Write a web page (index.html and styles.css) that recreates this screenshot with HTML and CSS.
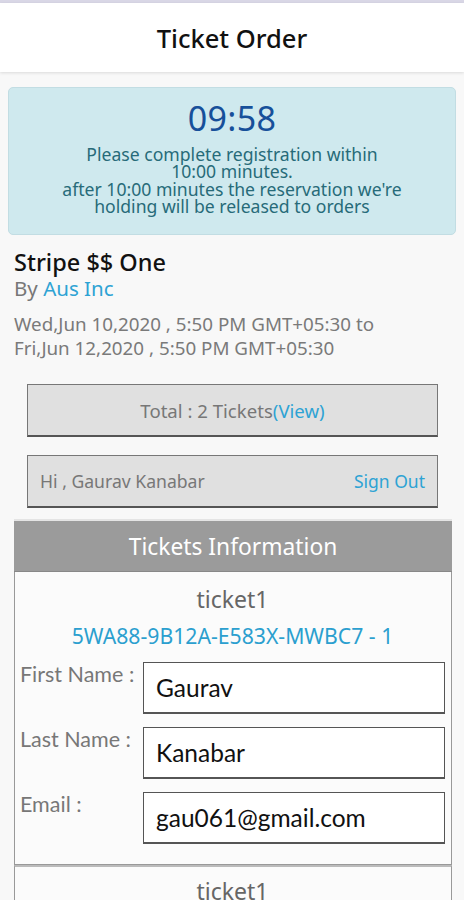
FILE: index.html
```html
<!DOCTYPE html>
<html>
<head>
<meta charset="utf-8">
<link rel="stylesheet" href="styles.css">
</head>
<body>
<div class="topline"></div>
<header class="header">Ticket Order</header>
<main class="content">
  <section class="timer">
    <div class="timer-count">09:58</div>
    <div class="timer-text">Please complete registration within<br>10:00 minutes.<br>after 10:00 minutes the reservation we're<br>holding will be released to orders</div>
  </section>
  <section class="event">
    <h1 class="event-title">Stripe $$ One</h1>
    <div class="event-by">By <a class="link">Aus Inc</a></div>
    <div class="event-date">Wed,Jun 10,2020 , 5:50 PM GMT+05:30 to<br>Fri,Jun 12,2020 , 5:50 PM GMT+05:30</div>
  </section>
  <div class="box box-total">Total : 2 Tickets<a class="link">(View)</a></div>
  <div class="box box-user"><span>Hi , Gaurav Kanabar</span><a class="link">Sign Out</a></div>
  <section class="tickets">
    <div class="tickets-head">Tickets Information</div>
    <div class="ticket">
      <div class="ticket-name">ticket1</div>
      <div class="ticket-code">5WA88-9B12A-E583X-MWBC7 - 1</div>
      <div class="field"><label>First Name :</label><div class="input">Gaurav</div></div>
      <div class="field"><label>Last Name :</label><div class="input">Kanabar</div></div>
      <div class="field"><label>Email :</label><div class="input">gau061@gmail.com</div></div>
    </div>
    <div class="ticket">
      <div class="ticket-name">ticket1</div>
    </div>
  </section>
</main>
</body>
</html>
```
FILE: styles.css
```css
* { box-sizing: border-box; }
html, body { margin: 0; padding: 0; }
body {
  background: #f8f8f8;
  font-family: "Noto Sans", Roboto, sans-serif;
  color: #333;
  width: 464px;
  height: 900px;
  overflow: hidden;
}
.topline { height: 3px; background: #d9d7e6; }
.header {
  background: #fff;
  height: 69px;
  display: flex;
  align-items: center;
  justify-content: center;
  font-size: 25.5px;
  font-weight: 500;
  color: #111;
  box-shadow: 0 1px 3px rgba(0,0,0,0.12);
  position: relative;
}
.content { padding: 15px 8px 0 8px; }
.timer {
  background: #cfe9ee;
  border: 1px solid #c2dde3;
  border-radius: 5px;
  height: 148px;
  text-align: center;
  padding-top: 12px;
}
.timer-count {
  font-size: 34px;
  color: #17509a;
  line-height: 36px;
  letter-spacing: 0.3px;
}
.timer-text {
  margin-top: 10px;
  font-size: 17.6px;
  line-height: 17.3px;
  color: #276b79;
}
.event { padding: 12px 6px 0 6px; }
.event-title {
  margin: 0;
  font-size: 23.5px;
  font-weight: 500;
  color: #111;
  line-height: 30px;
}
.event-by {
  font-size: 20.5px;
  color: #777;
  line-height: 22px;
}
.link { color: #2ea3d4; text-decoration: none; }
.event-date {
  margin-top: 13px;
  font-size: 18.8px;
  color: #7a7a7a;
  line-height: 24px;
}
.box {
  margin: 0 18px 0 19px;
  height: 53px;
  background: #e0e0e0;
  border: 1px solid #777;
  border-bottom: 2px solid #555;
  font-size: 18.6px;
  color: #777;
  display: flex;
  align-items: center;
}
.box-total { margin-top: 24px; justify-content: center; }
.box-user { margin-top: 18px; justify-content: space-between; padding: 0 12px 0 12px; font-size: 17.6px; }
.box-user .link { font-size: 17.5px; }
.tickets { margin: 11px 4px 0 6px; border-top: 2px solid #e4e4e4; }
.tickets-head {
  background: #9b9b9b;
  color: #fff;
  height: 51px;
  display: flex;
  align-items: center;
  justify-content: center;
  font-size: 22.8px;
  border-bottom: 1px solid #888;
}
.ticket {
  background: #fbfbfb;
  border: 1px solid #999;
  border-top: none;
  padding: 14px 6px 20px 5px;
  position: relative;
}
.ticket + .ticket { border-top: 2px solid #bbb; padding-top: 11px; }
.ticket-name {
  text-align: center;
  font-size: 23px;
  color: #666;
  line-height: 26px;
}
.ticket-code {
  text-align: center;
  font-size: 21.2px;
  color: #2b9fcf;
  line-height: 26px;
  margin-top: 11px;
}
.field {
  display: flex;
  align-items: flex-start;
  margin-top: 13px;
}
.field label {
  width: 123px;
  font-family: Lato, sans-serif;
  font-size: 21.5px;
  color: #777;
  line-height: 24px;
}
.input {
  flex: 1;
  height: 52px;
  border: 1px solid #555;
  border-bottom: 2px solid #555;
  background: #fff;
  font-family: Lato, sans-serif;
  font-size: 24.5px;
  color: #111;
  display: flex;
  align-items: center;
  padding: 0 0 0 12px;
}
```
